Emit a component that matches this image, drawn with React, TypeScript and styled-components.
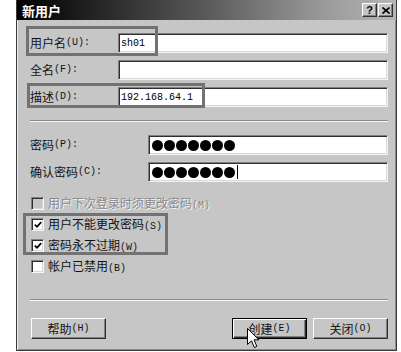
import React from "react";
import styled, { createGlobalStyle } from "styled-components";

const Global = createGlobalStyle`
  html, body { margin: 0; padding: 0; background: #fff; }
  body {
    font-family: "Noto Sans CJK SC", "Liberation Sans", sans-serif;
    font-size: 12px;
    color: #141414;
  }
`;

const Window = styled.div`
  position: relative;
  box-sizing: border-box;
  margin-left: 16px;
  width: 381px;
  height: 351px;
  background: #c6c6c6;
  border: 1px solid #3a3a3a;
  border-top: none;
  box-shadow: inset 1px 0 #ececec, inset -1px -1px #8a8a8a;
  display: flex;
  flex-direction: column;
`;

const TitleBar = styled.div`
  box-sizing: border-box;
  height: 20px;
  display: flex;
  align-items: center;
  justify-content: space-between;
  padding: 0 3px 0 5px;
  background: linear-gradient(to right, #000 0%, #141414 12%, #5a5a5a 50%, #989898 80%, #b6b6b6 100%);
`;

const Title = styled.span`
  color: #fff;
  font-weight: 700;
  font-size: 13px;
  letter-spacing: 0;
`;

const TitleButtons = styled.div`
  display: flex;
  gap: 1px;
`;

const TitleButton = styled.div`
  box-sizing: border-box;
  width: 15px;
  height: 14px;
  background: #c6c6c6;
  border: 1px solid;
  border-color: #fff #303030 #303030 #fff;
  box-shadow: inset -1px -1px #808080;
  display: flex;
  align-items: center;
  justify-content: center;
  font-family: "Liberation Sans", sans-serif;
  font-weight: 700;
  font-size: 11px;
  color: #000;
  line-height: 1;
`;

const Body = styled.div`
  flex: 1;
  display: flex;
  flex-direction: column;
  padding: 13px 8px 0 13px;
`;

const FieldGrid = styled.div<{ $labelWidth: number }>`
  display: grid;
  grid-template-columns: ${(p) => p.$labelWidth}px 1fr;
  grid-auto-rows: 20px;
  row-gap: 7px;
  align-items: center;
`;

const Label = styled.span`
  display: flex;
  align-items: center;
  white-space: nowrap;
  line-height: 1;
`;

const Acc = styled.span`
  font-family: "Liberation Mono", monospace;
  font-size: 10px;
`;

const TextBox = styled.div`
  box-sizing: border-box;
  height: 20px;
  background: #fff;
  border-top: 1px solid #808080;
  border-left: 1px solid #808080;
  border-right: 1px solid #f4f4f4;
  border-bottom: 1px solid #f4f4f4;
  box-shadow: inset 1px 1px #2e2e2e, inset -1px -1px #d8d8d8;
  display: flex;
  align-items: center;
  padding-left: 2px;
  font-family: "Liberation Mono", monospace;
  font-size: 10px;
  color: #000;
`;

const Dots = styled.div`
  display: flex;
  align-items: center;
  gap: 1px;
  padding-left: 1px;
`;

const Dot = styled.span`
  width: 11px;
  height: 11px;
  border-radius: 50%;
  background: #000;
`;

const Caret = styled.span`
  width: 1px;
  height: 14px;
  margin-left: 1px;
  background: #000;
`;

const Separator = styled.div<{ $top: number }>`
  margin-top: ${(p) => p.$top}px;
  height: 0;
  border-top: 1px solid #8a8a8a;
  border-bottom: 1px solid #f6f6f6;
`;

const CheckList = styled.div`
  margin-top: 11px;
  display: flex;
  flex-direction: column;
`;

const CheckRow = styled.div<{ $disabled?: boolean }>`
  height: 21px;
  display: flex;
  align-items: center;
  gap: 4px;
  padding-left: 1px;
  color: ${(p) => (p.$disabled ? "#8a8a8a" : "#141414")};
  text-shadow: ${(p) => (p.$disabled ? "1px 1px #f4f4f4" : "none")};
  white-space: nowrap;
  line-height: 1;
`;

const Box = styled.span<{ $disabled?: boolean }>`
  box-sizing: border-box;
  width: 13px;
  height: 13px;
  flex: none;
  background: ${(p) => (p.$disabled ? "#c6c6c6" : "#fff")};
  border-top: 1px solid #808080;
  border-left: 1px solid #808080;
  border-right: 1px solid #f6f6f6;
  border-bottom: 1px solid #f6f6f6;
  box-shadow: inset 1px 1px #2e2e2e, inset -1px -1px #d8d8d8;
  display: flex;
  align-items: center;
  justify-content: center;
`;

const ButtonBar = styled.div`
  margin-top: 17px;
  display: flex;
  justify-content: space-between;
  padding-left: 1px;
`;

const ButtonGroup = styled.div`
  display: flex;
  gap: 6px;
`;

const Button = styled.div<{ $default?: boolean }>`
  box-sizing: border-box;
  width: 75px;
  height: 21px;
  background: #c6c6c6;
  display: flex;
  align-items: center;
  justify-content: center;
  line-height: 1;
  color: #141414;
  border: 1px solid;
  border-color: ${(p) => (p.$default ? "#000" : "#fff #303030 #303030 #fff")};
  box-shadow: ${(p) =>
    p.$default
      ? "inset 1px 1px #fff, inset -1px -1px #303030, inset -2px -2px #808080"
      : "inset -1px -1px #808080"};
`;

const Mark = styled.div<{ $x: number; $y: number; $w: number; $h: number }>`
  position: absolute;
  box-sizing: border-box;
  left: ${(p) => p.$x}px;
  top: ${(p) => p.$y}px;
  width: ${(p) => p.$w}px;
  height: ${(p) => p.$h}px;
  border: 3px solid #727272;
  pointer-events: none;
`;

const Cursor = styled.svg`
  position: absolute;
  left: 230px;
  top: 328px;
`;

const Check = () => (
  <svg width="8" height="8" viewBox="0 0 8 8">
    <path d="M0.8 3.6 L3 5.8 L7.2 1.2" fill="none" stroke="#000" strokeWidth="1.8" />
  </svg>
);

const CloseGlyph = () => (
  <svg width="8" height="7" viewBox="0 0 8 7">
    <path d="M0.5 0.5 L7.5 6.5 M7.5 0.5 L0.5 6.5" stroke="#000" strokeWidth="1.6" />
  </svg>
);

export default function App() {
  return (
    <>
      <Global />
      <Window>
        <TitleBar>
          <Title>新用户</Title>
          <TitleButtons>
            <TitleButton>?</TitleButton>
            <TitleButton>
              <CloseGlyph />
            </TitleButton>
          </TitleButtons>
        </TitleBar>
        <Body>
          <FieldGrid $labelWidth={88}>
            <Label>
              用户名<Acc>(U):</Acc>
            </Label>
            <TextBox>sh01</TextBox>
            <Label>
              全名<Acc>(F):</Acc>
            </Label>
            <TextBox />
            <Label>
              描述<Acc>(D):</Acc>
            </Label>
            <TextBox>192.168.64.1</TextBox>
          </FieldGrid>
          <Separator $top={13} />
          <FieldGrid $labelWidth={118} style={{ marginTop: 13 }}>
            <Label>
              密码<Acc>(P):</Acc>
            </Label>
            <TextBox>
              <Dots>
                {Array.from({ length: 7 }).map((_, i) => (
                  <Dot key={i} />
                ))}
              </Dots>
            </TextBox>
            <Label>
              确认密码<Acc>(C):</Acc>
            </Label>
            <TextBox>
              <Dots>
                {Array.from({ length: 7 }).map((_, i) => (
                  <Dot key={i} />
                ))}
                <Caret />
              </Dots>
            </TextBox>
          </FieldGrid>
          <CheckList>
            <CheckRow $disabled>
              <Box $disabled />
              <span>
                用户下次登录时须更改密码<Acc>(M)</Acc>
              </span>
            </CheckRow>
            <CheckRow>
              <Box>
                <Check />
              </Box>
              <span>
                用户不能更改密码<Acc>(S)</Acc>
              </span>
            </CheckRow>
            <CheckRow>
              <Box>
                <Check />
              </Box>
              <span>
                密码永不过期<Acc>(W)</Acc>
              </span>
            </CheckRow>
            <CheckRow>
              <Box />
              <span>
                帐户已禁用<Acc>(B)</Acc>
              </span>
            </CheckRow>
          </CheckList>
          <Separator $top={22} />
          <ButtonBar>
            <Button>
              帮助<Acc>(H)</Acc>
            </Button>
            <ButtonGroup>
              <Button $default>
                创建<Acc>(E)</Acc>
              </Button>
              <Button>
                关闭<Acc>(O)</Acc>
              </Button>
            </ButtonGroup>
          </ButtonBar>
        </Body>
        <Mark $x={9} $y={26} $w={132} $h={30} />
        <Mark $x={10} $y={83} $w={178} $h={25} />
        <Mark $x={6} $y={213} $w={145} $h={42} />
        <Cursor width="13" height="21" viewBox="0 0 13 21">
          <path
            d="M0.5 0.5 L0.5 16.5 L4.5 12.8 L7.3 19.5 L9.8 18.4 L7 11.8 L12 11.8 Z"
            fill="#fff"
            stroke="#000"
            strokeWidth="1"
            strokeLinejoin="miter"
          />
        </Cursor>
      </Window>
    </>
  );
}
